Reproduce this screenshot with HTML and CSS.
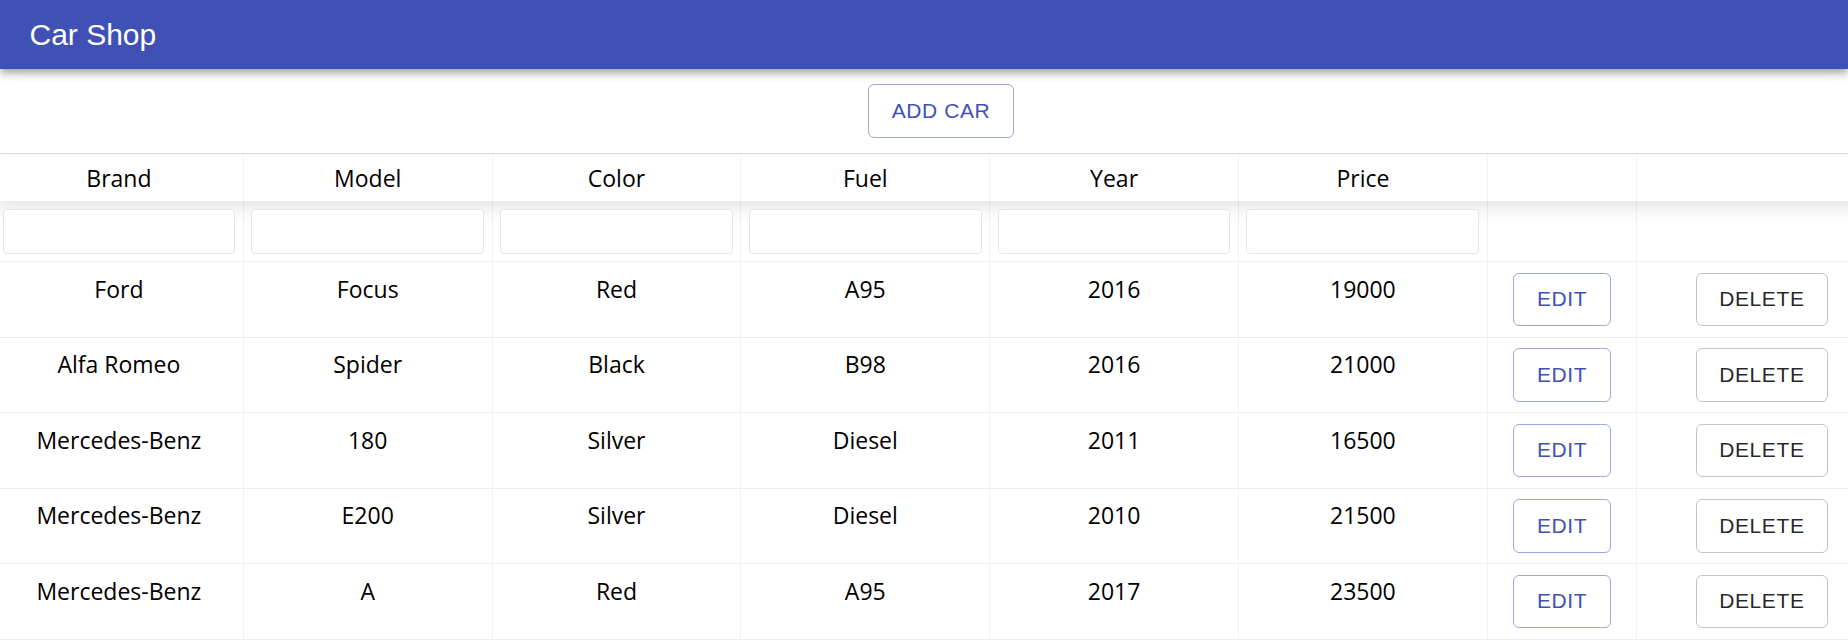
FILE: index.html
```html
<!DOCTYPE html>
<html lang="en">
<head>
<meta charset="utf-8">
<title>Car Shop</title>
<link rel="stylesheet" href="styles.css">
</head>
<body>
<header class="appbar">
  <h1 class="title">Car Shop</h1>
</header>
<div class="actions">
  <button class="btn btn-primary">Add car</button>
</div>
<div class="table-wrap">
  <div class="table">
    <div class="row head">
      <div class="cell">Brand</div>
      <div class="cell">Model</div>
      <div class="cell">Color</div>
      <div class="cell">Fuel</div>
      <div class="cell">Year</div>
      <div class="cell">Price</div>
      <div class="cell col-edit"></div>
      <div class="cell col-del"></div>
    </div>
    <div class="row filters">
      <div class="cell"><input class="filter" type="text"></div>
      <div class="cell"><input class="filter" type="text"></div>
      <div class="cell"><input class="filter" type="text"></div>
      <div class="cell"><input class="filter" type="text"></div>
      <div class="cell"><input class="filter" type="text"></div>
      <div class="cell"><input class="filter" type="text"></div>
      <div class="cell col-edit"></div>
      <div class="cell col-del"></div>
    </div>
    <div class="row data">
      <div class="cell">Ford</div>
      <div class="cell">Focus</div>
      <div class="cell">Red</div>
      <div class="cell">A95</div>
      <div class="cell">2016</div>
      <div class="cell">19000</div>
      <div class="cell col-edit action"><button class="btn btn-primary">Edit</button></div>
      <div class="cell col-del action"><button class="btn btn-default">Delete</button></div>
    </div>
    <div class="row data">
      <div class="cell">Alfa Romeo</div>
      <div class="cell">Spider</div>
      <div class="cell">Black</div>
      <div class="cell">B98</div>
      <div class="cell">2016</div>
      <div class="cell">21000</div>
      <div class="cell col-edit action"><button class="btn btn-primary">Edit</button></div>
      <div class="cell col-del action"><button class="btn btn-default">Delete</button></div>
    </div>
    <div class="row data">
      <div class="cell">Mercedes-Benz</div>
      <div class="cell">180</div>
      <div class="cell">Silver</div>
      <div class="cell">Diesel</div>
      <div class="cell">2011</div>
      <div class="cell">16500</div>
      <div class="cell col-edit action"><button class="btn btn-primary">Edit</button></div>
      <div class="cell col-del action"><button class="btn btn-default">Delete</button></div>
    </div>
    <div class="row data">
      <div class="cell">Mercedes-Benz</div>
      <div class="cell">E200</div>
      <div class="cell">Silver</div>
      <div class="cell">Diesel</div>
      <div class="cell">2010</div>
      <div class="cell">21500</div>
      <div class="cell col-edit action"><button class="btn btn-primary">Edit</button></div>
      <div class="cell col-del action"><button class="btn btn-default">Delete</button></div>
    </div>
    <div class="row data">
      <div class="cell">Mercedes-Benz</div>
      <div class="cell">A</div>
      <div class="cell">Red</div>
      <div class="cell">A95</div>
      <div class="cell">2017</div>
      <div class="cell">23500</div>
      <div class="cell col-edit action"><button class="btn btn-primary">Edit</button></div>
      <div class="cell col-del action"><button class="btn btn-default">Delete</button></div>
    </div>
  </div>
</div>
</body>
</html>
```
FILE: styles.css
```css
* { box-sizing: border-box; }

html, body {
  margin: 0;
  padding: 0;
  overflow: hidden;
  background: #fff;
}

body {
  font-family: "Open Sans", "Noto Sans", sans-serif;
  color: #000;
}

.appbar {
  position: relative;
  z-index: 2;
  height: 69px;
  background: #3f51b5;
  display: flex;
  align-items: center;
  padding-left: 29.5px;
  box-shadow: 0 3px 6px -1.5px rgba(0,0,0,.2), 0 6px 7.5px 0 rgba(0,0,0,.14), 0 1.5px 15px 0 rgba(0,0,0,.12);
}

.title {
  margin: 0;
  font-family: "Liberation Sans", Arial, sans-serif;
  font-weight: 400;
  font-size: 30px;
  line-height: 48px;
  color: #fff;
}

.actions {
  display: flex;
  justify-content: center;
  padding: 15px 0 15.5px 34px;
}

.btn {
  font-family: "Liberation Sans", Arial, sans-serif;
  font-size: 21px;
  font-weight: 400;
  letter-spacing: 0.6px;
  text-transform: uppercase;
  line-height: 36.5px;
  padding: 7.5px 22.5px;
  border-radius: 6px;
  background: transparent;
  min-width: 96px;
  margin: 0;
}

.btn-primary {
  color: #3f51b5;
  border: 1px solid rgba(63,81,181,.5);
}

.btn-default {
  color: rgba(0,0,0,.87);
  border: 1px solid rgba(0,0,0,.23);
}

.table-wrap {
  overflow: hidden;
}

.table {
  margin-left: -5px;
  width: 1893px;
  border-top: 1px solid rgba(0,0,0,.1);
}

.row {
  display: flex;
}

.cell {
  flex: 0 0 248.8px;
  width: 248.8px;
  border-right: 1px solid rgba(0,0,0,.05);
  text-align: center;
  white-space: nowrap;
  overflow: hidden;
  font-size: 23px;
  line-height: 32px;
}

.cell.col-edit {
  flex: 0 0 149.6px;
  width: 149.6px;
}

.cell.col-del {
  flex: 0 0 250px;
  width: 250px;
}

.head {
  position: relative;
  z-index: 1;
  box-shadow: 0 3px 22px 0 rgba(0,0,0,.15);
}

.head .cell {
  padding: 7.5px 7.5px;
  height: 47px;
}

.filters {
  border-bottom: 1px solid rgba(0,0,0,.06);
}

.filters .cell {
  padding: 7.5px 7.5px;
  height: 60px;
  overflow: visible;
}

.filter {
  display: block;
  width: 100%;
  height: 45px;
  margin: 0;
  border: 1px solid rgba(0,0,0,.1);
  border-radius: 4.5px;
  background: #fff;
  position: relative;
  z-index: 2;
}

.data {
  border-bottom: 1px solid rgba(0,0,0,.07);
}

.data .cell {
  padding: 10.5px 7.5px;
  height: 74.5px;
}

.cell.action {
  display: flex;
  justify-content: center;
  align-items: flex-start;
}
```
